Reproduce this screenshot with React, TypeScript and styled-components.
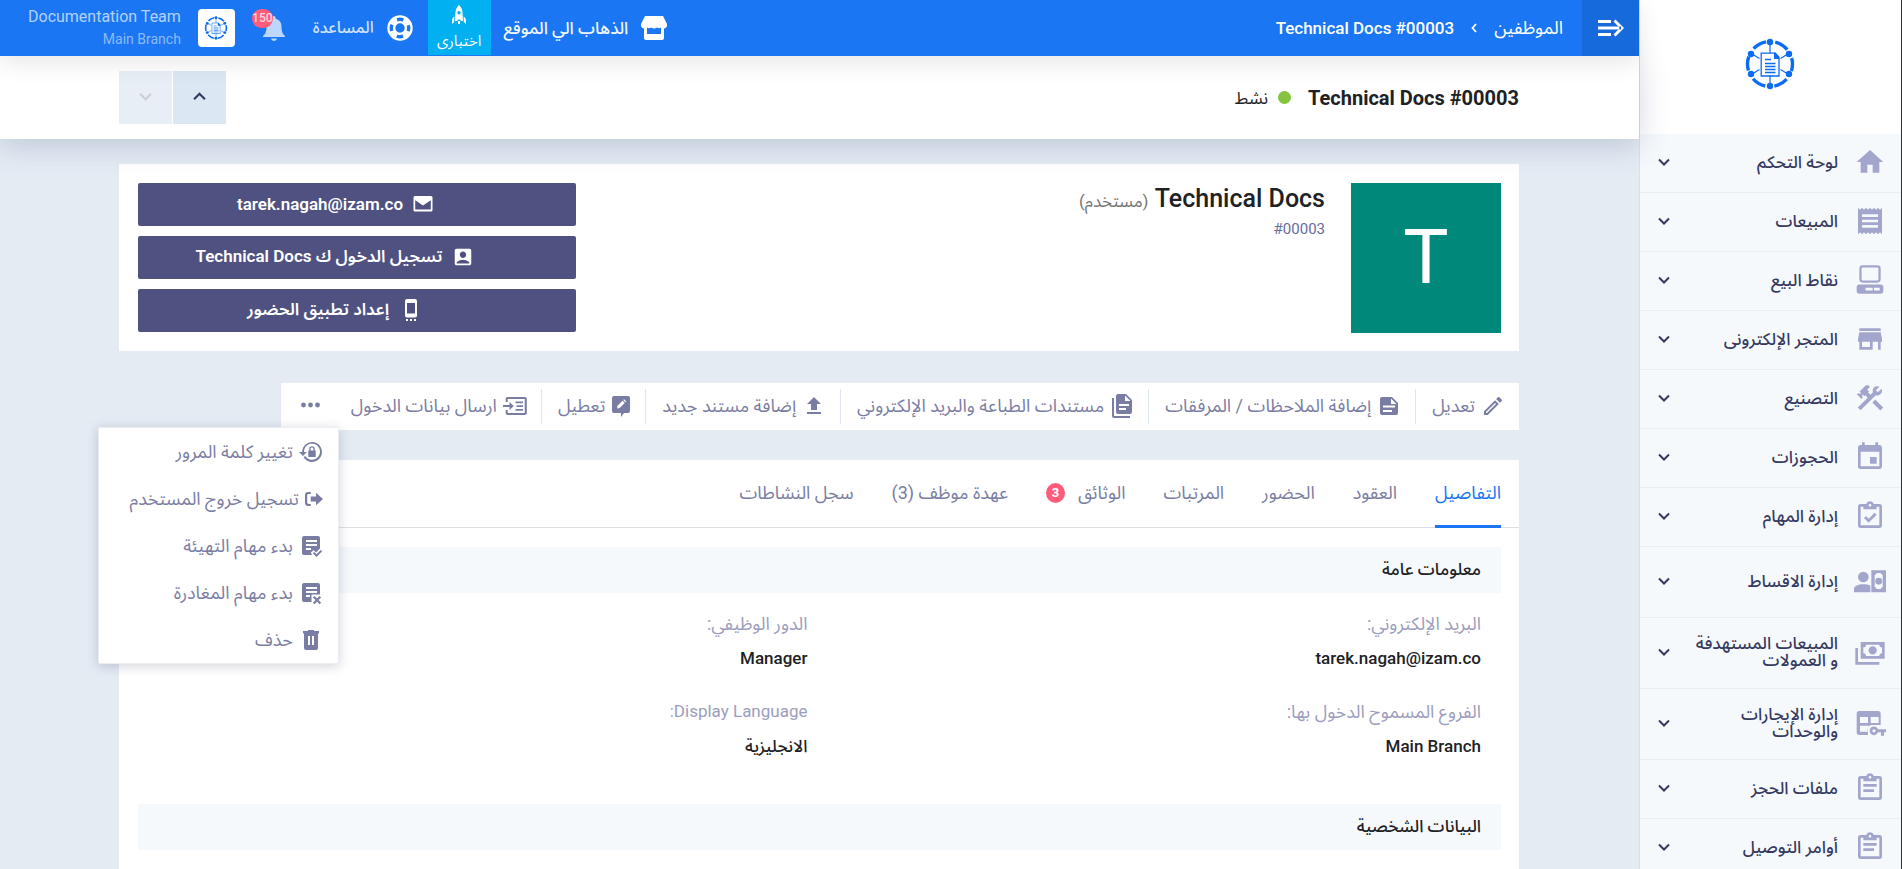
import React from 'react';
import styled, { createGlobalStyle } from 'styled-components';
import { MdEvent, MdFileUpload, MdHome, MdReceipt, MdStore, MdAccountBox } from 'react-icons/md';

const GlobalStyle = createGlobalStyle`
  *, *::before, *::after { box-sizing: border-box; }
  body {
    margin: 0;
    background: #e4ebf3;
    font-family: Roboto, "Noto Sans Arabic", "DejaVu Sans", sans-serif;
    font-size: 17px;
    color: #202124;
  }
  button { font: inherit; border: 0; cursor: pointer; }
  a { text-decoration: none; color: inherit; }
  h1, h2, p, dl, dt, dd, ul { margin: 0; padding: 0; }
  ul { list-style: none; }
  svg { display: block; flex: none; }
`;

/* ---------- shell ---------- */

const Shell = styled.div`
  display: flex;
  height: 100vh;
  overflow: hidden;
  border-right: 1px solid #2b2d33;
`;

const Sidebar = styled.aside`
  flex: none;
  width: 262px;
  display: flex;
  flex-direction: column;
  background: #f5f9fc;
  border-left: 1px solid #dcdfe6;
`;

const Brand = styled.a`
  flex: none;
  height: 134px;
  padding: 0 2px 6px 0;
  display: grid;
  place-items: center;
  background: #fff;
`;

const SideNav = styled.nav`
  flex: 1;
  min-height: 0;
  overflow-y: auto;
  scrollbar-width: none;
`;

const SideItem = styled.button<{ $tall?: boolean }>`
  width: 100%;
  min-height: ${p => (p.$tall ? 71 : 59)}px;
  padding: 0 15px 2px 18px;
  display: flex;
  align-items: center;
  gap: 16px;
  text-align: right;
  background: transparent;
  border-bottom: 1px solid #eaeef2;
  color: #36395f;
`;

const SideIcon = styled.span`
  color: #a2a6cc;
`;

const SideLabel = styled.span`
  flex: 1;
  font-weight: 500;
  line-height: 17px;
`;

const Main = styled.div`
  flex: 1;
  min-width: 0;
  display: flex;
  flex-direction: column;
`;

/* ---------- top bar ---------- */

const TopBar = styled.header`
  position: relative;
  z-index: 3;
  flex: none;
  height: 56px;
  display: flex;
  align-items: center;
  background: #1a76f3;
  color: #fff;
  box-shadow: 0 6px 24px rgba(0, 0, 0, 0.1);
`;

const CollapseButton = styled.button`
  align-self: stretch;
  width: 57px;
  display: grid;
  place-items: center;
  background: #176adb;
  color: #fff;
`;

const Breadcrumb = styled.nav`
  display: flex;
  align-items: center;
  gap: 17px;
  padding: 0 19px;
  line-height: 24px;
  a { font-size: 18px; }
`;

const Crumb = styled.span`
  font-weight: 500;
`;

const TopActions = styled.div`
  align-self: stretch;
  margin-right: auto;
  padding-left: 28px;
  display: flex;
  align-items: center;
`;

const TopLink = styled.a<{ $dim?: boolean }>`
  display: flex;
  align-items: center;
  gap: 13px;
  padding: 0 15px 0 13px;
  font-size: ${p => (p.$dim ? 16 : 17)}px;
  font-weight: 500;
  line-height: 24px;
  span { opacity: ${p => (p.$dim ? 0.8 : 0.95)}; }
`;

const TrialBadge = styled.a`
  align-self: stretch;
  width: 63px;
  margin-bottom: 1px;
  padding-top: 5px;
  display: flex;
  flex-direction: column;
  align-items: center;
  gap: 5px;
  background: #00b0f0;
  font-size: 15px;
  line-height: 24px;
`;

const BellButton = styled.button`
  position: relative;
  margin-right: 15px;
  padding: 0;
  background: transparent;
  color: #bcd7fb;
`;

const BellCount = styled.span`
  position: absolute;
  left: -11px;
  top: -7px;
  width: 21px;
  height: 19px;
  border-radius: 10px;
  background: #ff5b7b;
  color: #ffd9e0;
  font-size: 12px;
  font-weight: 500;
  line-height: 19px;
  text-align: center;
`;

const Avatar = styled.span`
  width: 37px;
  height: 38px;
  margin: 0 28px 0 17px;
  display: grid;
  place-items: center;
  border-radius: 4px;
  background: #fff;
`;

const Account = styled.a`
  display: flex;
  flex-direction: column;
  direction: ltr;
  align-items: flex-end;
  line-height: 22px;
  font-size: 16px;
  color: #b3d1fb;
  small { font-size: 14px; color: #8dbaf9; }
`;

/* ---------- page header ---------- */

const PageHead = styled.div`
  position: relative;
  z-index: 2;
  flex: none;
  padding: 15px 17px 15px 16px;
  background: #fff;
  box-shadow: 0 6px 30px rgba(70, 80, 130, 0.24);
`;

const Container = styled.div`
  width: 100%;
  max-width: 1400px;
  margin: 0 auto;
`;

const HeadRow = styled(Container)`
  display: flex;
  align-items: center;
`;

const PageTitle = styled.h1`
  font-size: 20px;
  font-weight: 700;
  line-height: 28px;
`;

const Status = styled.span`
  margin-right: 17px;
  display: flex;
  align-items: center;
  gap: 10px;
  line-height: 28px;
  &::before {
    content: '';
    width: 13px;
    height: 13px;
    border-radius: 50%;
    background: #84c341;
  }
`;

const Pager = styled.div`
  margin-right: auto;
  display: flex;
  gap: 1px;
`;

const PagerButton = styled.button`
  width: 53px;
  height: 53px;
  padding-bottom: 4px;
  display: grid;
  place-items: center;
  background: #dbe7f2;
  color: #36395f;
  &:disabled { background: #e8eef6; color: #cccfd3; cursor: default; }
`;

const Content = styled.main`
  flex: 1;
  min-height: 0;
  padding: 25px 17px 0 16px;
  overflow-y: auto;
  scrollbar-width: none;
`;

/* ---------- profile ---------- */

const Profile = styled.section`
  padding: 19px 18px 18px 19px;
  display: flex;
  background: #fff;
`;

const Portrait = styled.div`
  flex: none;
  width: 150px;
  height: 150px;
  background: #00897b;
  color: #fff;
  font-size: 76px;
  line-height: 148px;
  text-align: center;
`;

const Identity = styled.div`
  flex: 1;
  padding: 0 26px;
`;

const PersonName = styled.h2`
  font-size: 25px;
  font-weight: 500;
  line-height: 32px;
  small { font-size: 17px; font-weight: 400; color: #757575; }
`;

const PersonCode = styled.p`
  font-size: 15px;
  line-height: 24px;
  text-align: right;
  color: #666ba0;
`;

const ProfileActions = styled.div`
  flex: none;
  width: 438px;
  display: flex;
  flex-direction: column;
  gap: 10px;
`;

const ProfileButton = styled.a`
  height: 43px;
  padding: 0 44px 1px 0;
  display: flex;
  align-items: center;
  justify-content: center;
  gap: 10px;
  border-radius: 2px;
  background: #4f5281;
  color: #fff;
  font-weight: 600;
`;

/* ---------- toolbar ---------- */

const Toolbar = styled.div`
  width: fit-content;
  height: 47px;
  margin: 32px 0 30px;
  display: flex;
  align-items: center;
  background: #fff;
  color: #7a7da3;
`;

const ToolButton = styled.button`
  height: 35px;
  padding: 0 14px 2px 16px;
  display: flex;
  align-items: center;
  gap: 6px;
  background: transparent;
  color: inherit;
  font-size: 18px;
  line-height: 24px;
  white-space: nowrap;
  & + & { border-right: 1px solid #dfe5f0; }
`;

const MoreWrap = styled.div`
  position: relative;
`;

const MoreButton = styled.button`
  height: 47px;
  padding: 0 15px 0 20px;
  background: transparent;
  color: inherit;
`;

const Menu = styled.ul`
  position: absolute;
  z-index: 1;
  top: 46px;
  right: -4px;
  width: 241px;
  background: #fff;
  border: 1px solid #eceef3;
  border-radius: 2px;
  box-shadow: 0 2px 12px rgba(40, 45, 80, 0.22);
`;

const MenuItem = styled.button`
  width: 100%;
  height: 47px;
  padding: 0 15px;
  display: flex;
  align-items: center;
  gap: 6px;
  background: transparent;
  color: inherit;
  font-size: 18px;
  line-height: 24px;
  white-space: nowrap;
`;

/* ---------- details ---------- */

const Panel = styled.section`
  background: #fff;
`;

const Tabs = styled.nav`
  display: flex;
  gap: 38px;
  padding: 0 18px;
  border-bottom: 1px solid #dcdfe3;
`;

const Tab = styled.a<{ $active?: boolean }>`
  height: 68px;
  margin-bottom: -1px;
  display: flex;
  align-items: center;
  gap: 13px;
  border-bottom: 3px solid ${p => (p.$active ? '#1a76f3' : 'transparent')};
  color: ${p => (p.$active ? '#1a76f3' : '#7a7da3')};
  font-size: 18px;
  white-space: nowrap;
`;

const TabCount = styled.span`
  width: 19px;
  height: 20px;
  border-radius: 50%;
  background: #ff5b7b;
  color: #fff;
  font-size: 13px;
  font-weight: 700;
  line-height: 20px;
  text-align: center;
`;

const PanelBody = styled.div`
  padding: 19px 18px 19px 19px;
`;

const SectionTitle = styled.h2`
  padding: 0 20px 2px;
  font-size: 17px;
  font-weight: 500;
  line-height: 44px;
  background: #f5f9fc;
`;

const Fields = styled.dl`
  display: grid;
  grid-template-columns: 1fr 1fr;
  row-gap: 18px;
  padding: 13px 8px 40px;
`;

const Field = styled.div`
  padding: 0 12px;
  line-height: 35px;
  dt { color: #9b9ebd; font-size: 18px; }
  dt:lang(en) { font-size: 17px; }
  dd { font-weight: 500; }
`;

/* ---------- drawings ---------- */

const Glyph = ({ d, size = 24, width, box = '0 0 24 24' }: { d: string; size?: number; width?: number; box?: string }) => (
  <svg width={width ?? size} height={size} viewBox={box} fill="currentColor" fillRule="evenodd" aria-hidden="true">
    <path d={d} />
  </svg>
);

const Chevron = ({ up, size = 12 }: { up?: boolean; size?: number }) => (
  <svg width={size} height={size} viewBox="0 0 12 12" fill="none" stroke="currentColor" strokeWidth="2" aria-hidden="true">
    <path d={up ? 'M1 8.5 6 3.5l5 5' : 'M1 3.5l5 5 5-5'} />
  </svg>
);

const BrandMark = ({ size }: { size: number }) => (
  <svg width={size} height={size} viewBox="0 0 52 52" fill="none" stroke="#0a6cf1" aria-hidden="true">
    <circle cx="26" cy="26" r="22.5" strokeWidth="3.4" strokeDasharray="14.2 9.36" strokeDashoffset="7.1" />
    <path d="M26 6v9M26 37v9M9 16.5l6.5 4M43 16.5l-6.5 4M9 35.5l6.5-4M43 35.5l-6.5-4" strokeWidth="1.2" />
    <g fill="#0a6cf1" stroke="none">
      <circle cx="26" cy="4" r="3.2" />
      <circle cx="26" cy="48" r="3.2" />
      <circle cx="7" cy="16" r="3.2" />
      <circle cx="45" cy="16" r="3.2" />
      <circle cx="7" cy="36" r="3.2" />
      <circle cx="45" cy="36" r="3.2" />
      <path d="M30 14.5h1.5l3.7 4v2.500H30z" />
    </g>
    <path d="M18.5 15.2h12.500l4 4.300v18.500H17.200V15.200zM21 21.500h6M21 25.500h10.500M21 28.500h10.500M21 31.500h10.500M21 34.500h10.500" strokeWidth="1.3" />
  </svg>
);

const clipboard =
  'M19 3h-4.180C14.400 1.840 13.300 1 12 1s-2.400.84-2.820 2H5a2 2 0 0 0-2 2v14a2 2 0 0 0 2 2h14a2 2 0 0 0 2-2V5a2 2 0 0 0-2-2zM12 3a1 1 0 1 1 0 2 1 1 0 0 1 0-2zM7 7h10V5h2v14H5V5h2z';

const shapes = {
  pos: 'M6.500 1h11A2.500 2.500 0 0 1 20 3.500v8a2.500 2.500 0 0 1-2.500 2.500h-11A2.500 2.500 0 0 1 4 11.500v-8A2.500 2.500 0 0 1 6.500 1zM6.500 2.700a.8.8 0 0 0-.8.8v8a.8.8 0 0 0 .8.8h11a.8.8 0 0 0 .8-.8v-8a.8.8 0 0 0-.8-.8zM4 15.300h16a2 2 0 0 1 2 2v3a2 2 0 0 1-2 2H4a2 2 0 0 1-2-2v-3a2 2 0 0 1 2-2zM8.600 17.900v2h5.400v-2zM15 17.900v2h4.300v-2z',
  tools:
    'M13.780 15.300l6 6 2.110-2.160-6-6zM17.500 10.100c-.39 0-.81-.05-1.140-.19L4.970 21.250l-2.110-2.110 7.410-7.400L8.500 9.960l-.72.7-1.450-1.410v2.860l-.7.7-3.520-3.560.7-.7h2.810l-1.400-1.410 3.560-3.560a2.976 2.976 0 0 1 4.220 0L9.890 5.740l1.410 1.400-.71.71 1.790 1.780 1.820-1.880c-.14-.33-.2-.75-.2-1.120a3.490 3.490 0 0 1 3.500-3.520c.59 0 1.110.14 1.580.42L16.410 6.200l1.500 1.500 2.670-2.670c.28.47.42.97.42 1.600 0 1.920-1.550 3.470-3.500 3.470z',
  tasks: clipboard + 'M7.500 13.500 9 12l2 2 4.500-4.500L17 11l-6 6z',
  file: clipboard + 'M17 11H7V9h10zM15 15H7v-2h8z',
  installments:
    'M7 5a4 4 0 1 1 0 8 4 4 0 0 1 0-8zM0 20.500v-2.500c0-2.200 3.200-3.500 7-3.500 2 0 4 .4 5.300 1v5zM13 4h11v16.500H13zM15.500 7.500v9a2 2 0 0 1 1.500 1.500h3a2 2 0 0 1 1.500-1.500v-9A2 2 0 0 1 20 6h-3a2 2 0 0 1-1.500 1.500zM18.500 9.500a2.600 2.600 0 1 1 0 5.200 2.600 2.600 0 0 1 0-5.200z',
  money:
    'M5 4.500h18v12.500H5zM14 7.700a3.100 3.100 0 1 1 0 6.200 3.100 3.100 0 0 1 0-6.200zM9 6.500a2 2 0 0 1-2 2v4.500a2 2 0 0 1 2 2h10a2 2 0 0 1 2-2V8.500a2 2 0 0 1-2-2zM1 9h2v10.500h16v2H1z',
  rental:
    'M4 3h14a2 2 0 0 1 2 2v8.500h-7.500A4.500 4.500 0 0 0 10.500 19.500V21H4a2 2 0 0 1-2-2V5a2 2 0 0 1 2-2zM4.500 7.500V12h6V7.500zM12.500 7.500V12h6V7.500zM4.500 14v4.500h5.300c-.1-1.800.5-3.400 1.700-4.500zM15 14.700c1.400 0 2.500.8 3 2H24v2.300h-1.500V21.500h-2.300V19H18a3.200 3.200 0 1 1-3-4.300zM15 16.700a1.200 1.200 0 1 0 0 2.400 1.200 1.200 0 0 0 0-2.400z',
  storefront:
    'M4 0h18l4 8a3.500 3.500 0 0 1-3 4.500V22a2 2 0 0 1-2 2H5a2 2 0 0 1-2-2V12.500A3.500 3.500 0 0 1 0 8zM6 11.500V18h14v-6.500c-1.300 1-2.800 1-4 0-1.800 1.300-4.200 1.300-6 0-1.200 1-2.700 1-4 0z',
  bell: 'M11 25a3 3 0 0 0 3-2.500H8A3 3 0 0 0 11 25zM12.500 2.700C16 3.400 18.500 6.200 18.500 10c0 5.500 1 8 3.500 10v1H0v-1c2.500-2 3.500-4.500 3.500-10C3.500 6.200 6 3.400 9.500 2.700V1.500a1.500 1.500 0 0 1 3 0z',
  rocket:
    'M7 0c2.700 2.500 3.600 5.500 3.600 8.500L11 16H8.800L8 14.500H6L5.200 16H3l.4-7.500C3.400 5.500 4.300 2.500 7 0zM7 6a1.700 1.700 0 1 0 0 3.400A1.700 1.700 0 0 0 7 6zM2.400 11.500 2.200 17 0 19v-3.500c0-1.500 1-3 2.400-4zM11.600 11.500c1.400 1 2.400 2.500 2.400 4V19l-2.200-2zM6 16h2v3H6z',
  collapse: 'M0 0h13v3H0zM0 6.500h23v3H0zM0 13h13v3H0zM15.500 1.600 17.500-.4 26 8l-8.500 8.400-2-2L21.800 8z',
  mail: 'M2 0h16a1.500 1.500 0 0 1 1.500 1.500V14A1.500 1.500 0 0 1 18 15.500H2A1.500 1.500 0 0 1 .5 14V1.500A1.500 1.500 0 0 1 2 0zM2.200 4.300V13.500h15.600V4.300L10 9.500z',
  phone:
    'M2 0h8a2 2 0 0 1 2 2v14.500a2 2 0 0 1-2 2H2a2 2 0 0 1-2-2V2a2 2 0 0 1 2-2zM2 4v10.500h8V4zM1 20h2v2H1zM5 20h2v2H5zM9 20h2v2H9z',
  pencil:
    'M14.060 9l.94.94L5.920 19H5v-.92zM17.660 3c-.25 0-.51.1-.7.29l-1.830 1.830 3.750 3.750 1.830-1.830c.39-.39.39-1.040 0-1.410l-2.340-2.340c-.2-.2-.45-.29-.71-.29zM14.060 6.190 3 17.250V21h3.750L17.810 9.940z',
  note: 'M5 3h10l6 6v10a2 2 0 0 1-2 2H5a2 2 0 0 1-2-2V5a2 2 0 0 1 2-2zM14 4.500V10h5.500zM6 11.500v2h12v-2zM6 16v2h9v-2z',
  notes:
    'M8 0h8l6 6v12a2 2 0 0 1-2 2H8a2 2 0 0 1-2-2V2a2 2 0 0 1 2-2zM15 1.500V7h5.500zM9 10v2h10v-2zM9 14v2h7v-2zM2 4h2v18h16v2H4a2 2 0 0 1-2-2z',
  comment:
    'M4 2h14a2 2 0 0 1 2 2v13a2 2 0 0 1-2 2h-4L11 23v-4H4a2 2 0 0 1-2-2V4a2 2 0 0 1 2-2zM7 14.500l.5-2.700 5-5 2.200 2.200-5 5zM13.200 6.100l.9-.9 2.200 2.200-.9.900z',
  send: 'M4.500 3H22a1.800 1.800 0 0 1 1.800 1.800v14.400A1.800 1.800 0 0 1 22 21H4.500a1.800 1.800 0 0 1-1.800-1.800V16h2v3h17V5h-17v3h-2V4.800A1.800 1.800 0 0 1 4.500 3zM0 11h6.500V8l4.300 4-4.300 4v-3H0zM12.500 7.500H20v1.800h-7.500zM13.500 11.200H20V13h-6.500zM12.500 15H20v1.800h-7.500z',
  resetLock:
    'M13 2a10 10 0 1 1-8.500 15.300l1.800-1.200A8 8 0 1 0 5 12h2.800L4 16 0 12h3A10 10 0 0 1 13 2zM10.200 10.500V9a2.800 2.800 0 0 1 5.600 0v1.500h.9v6.500H9.300v-6.500zM11.600 10.500h2.800V9a1.400 1.400 0 0 0-2.800 0z',
  signOut: 'M7 2.500H4a4 4 0 0 0-4 4v9a4 4 0 0 0 4 4h3V17H4.500A1.800 1.800 0 0 1 2.700 15.200V6.800A1.800 1.800 0 0 1 4.500 5H7zM13.500 3.500 22 11l-8.500 7.500V14H7V8h6.500z',
  taskStart:
    'M5 2h14a2 2 0 0 1 2 2v10.500l-4 4-2.500-2.500-2.700 2.700 1.500 2.300H5a2 2 0 0 1-2-2V4a2 2 0 0 1 2-2zM7 6v2h11V6zM7 10v2h11v-2zM7 14v2h5v-2zM17.500 23l-3.700-3.700 1.400-1.400 2.300 2.300 4.300-4.300 1.400 1.400z',
  taskLeave:
    'M5 2h14a2 2 0 0 1 2 2v9.500h-8.500V21H5a2 2 0 0 1-2-2V4a2 2 0 0 1 2-2zM7 6v2h11V6zM7 10v2h11v-2zM7 14v2h4v-2zM15.400 15l2.600 2.600 2.600-2.600 1.500 1.500-2.600 2.600 2.600 2.600-1.500 1.500-2.600-2.600-2.600 2.600-1.500-1.500 2.600-2.600-2.600-2.600z',
  trash: 'M9 2v1H4v2.500h1V20a2 2 0 0 0 2 2h10a2 2 0 0 0 2-2V5.500h1V3h-5V2zM9 8h2v9H9zM13 8h2v9h-2z',
};

const LifeRing = () => (
  <svg width="26" height="26" viewBox="0 0 26 26" fill="none" aria-hidden="true">
    <circle cx="13" cy="13" r="8.7" stroke="#fff" strokeWidth="8" />
    <circle cx="13" cy="13" r="8.7" stroke="#1a76f3" strokeWidth="3.4" strokeDasharray="6.4 7.26" strokeDashoffset="3.2" />
  </svg>
);

const Dots = () => (
  <svg width="19" height="6" viewBox="0 0 19 6" fill="currentColor" aria-hidden="true">
    <circle cx="2.5" cy="3" r="2.4" />
    <circle cx="9.5" cy="3" r="2.4" />
    <circle cx="16.5" cy="3" r="2.4" />
  </svg>
);

const CrumbArrow = () => (
  <svg width="6" height="10" viewBox="0 0 6 10" fill="none" stroke="currentColor" strokeWidth="1.8" aria-hidden="true">
    <path d="M5 1 1.5 5 5 9" />
  </svg>
);

/* ---------- data ---------- */

const navItems: { label: string; icon: React.ReactNode; tall?: boolean }[] = [
  { label: 'لوحة التحكم', icon: <MdHome size={32} /> },
  { label: 'المبيعات', icon: <MdReceipt size={32} /> },
  { label: 'نقاط البيع', icon: <Glyph size={32} d={shapes.pos} /> },
  { label: 'المتجر الإلكترونى', icon: <MdStore size={32} /> },
  { label: 'التصنيع', icon: <Glyph size={32} d={shapes.tools} /> },
  { label: 'الحجوزات', icon: <MdEvent size={32} /> },
  { label: 'إدارة المهام', icon: <Glyph size={32} d={shapes.tasks} /> },
  { label: 'إدارة الاقساط', icon: <Glyph size={32} d={shapes.installments} />, tall: true },
  { label: 'المبيعات المستهدفة و العمولات', icon: <Glyph size={32} d={shapes.money} />, tall: true },
  { label: 'إدارة الإيجارات والوحدات', icon: <Glyph size={32} d={shapes.rental} />, tall: true },
  { label: 'ملفات الحجز', icon: <Glyph size={32} d={shapes.file} /> },
  { label: 'أوامر التوصيل', icon: <Glyph size={32} d={shapes.file} /> },
];

const tools = [
  { label: 'تعديل', icon: <Glyph d={shapes.pencil} /> },
  { label: 'إضافة الملاحظات / المرفقات', icon: <Glyph d={shapes.note} /> },
  { label: 'مستندات الطباعة والبريد الإلكتروني', icon: <Glyph d={shapes.notes} /> },
  { label: 'إضافة مستند جديد', icon: <MdFileUpload size={24} /> },
  { label: 'تعطيل', icon: <Glyph d={shapes.comment} width={20} box="1 0 20 24" /> },
  { label: 'ارسال بيانات الدخول', icon: <Glyph d={shapes.send} /> },
];

const menu = [
  { label: 'تغيير كلمة المرور', icon: <Glyph d={shapes.resetLock} /> },
  { label: 'تسجيل خروج المستخدم', icon: <Glyph d={shapes.signOut} size={18} box="0 0 22 22" /> },
  { label: 'بدء مهام التهيئة', icon: <Glyph d={shapes.taskStart} /> },
  { label: 'بدء مهام المغادرة', icon: <Glyph d={shapes.taskLeave} /> },
  { label: 'حذف', icon: <Glyph d={shapes.trash} /> },
];

const tabs: { label: string; count?: number }[] = [
  { label: 'التفاصيل' },
  { label: 'العقود' },
  { label: 'الحضور' },
  { label: 'المرتبات' },
  { label: 'الوثائق', count: 3 },
  { label: 'عهدة موظف (3)' },
  { label: 'سجل النشاطات' },
];

const fields: { label: string; value: string; lang?: string }[] = [
  { label: 'البريد الإلكتروني:', value: 'tarek.nagah@izam.co' },
  { label: 'الدور الوظيفي:', value: 'Manager' },
  { label: 'الفروع المسموح الدخول بها:', value: 'Main Branch' },
  { label: 'Display Language:', value: 'الانجليزية', lang: 'en' },
];

export default function App() {
  return (
    <>
      <GlobalStyle />
      <Shell dir="rtl" lang="ar">
        <Sidebar>
          <Brand href="#" aria-label="Documentation Team">
            <BrandMark size={52} />
          </Brand>
          <SideNav>
            {navItems.map(item => (
              <SideItem key={item.label} type="button" $tall={item.tall}>
                <SideIcon>{item.icon}</SideIcon>
                <SideLabel>{item.label}</SideLabel>
                <Chevron />
              </SideItem>
            ))}
          </SideNav>
        </Sidebar>

        <Main>
          <TopBar>
            <CollapseButton type="button" aria-label="القائمة">
              <Glyph d={shapes.collapse} size={18} width={26} box="0 -1 26 18" />
            </CollapseButton>
            <Breadcrumb>
              <a href="#">الموظفين</a>
              <CrumbArrow />
              <Crumb>Technical Docs #00003</Crumb>
            </Breadcrumb>
            <TopActions>
              <TopLink href="#">
                <Glyph d={shapes.storefront} size={24} width={26} box="0 0 26 24" />
                <span>الذهاب الي الموقع</span>
              </TopLink>
              <TrialBadge href="#">
                <Glyph d={shapes.rocket} size={19} width={14} box="0 0 14 19" />
                <span>اختبارى</span>
              </TrialBadge>
              <TopLink href="#" $dim>
                <LifeRing />
                <span>المساعدة</span>
              </TopLink>
              <BellButton type="button" aria-label="الإشعارات">
                <Glyph d={shapes.bell} size={25} width={22} box="0 0 22 25" />
                <BellCount>150</BellCount>
              </BellButton>
              <Avatar>
                <BrandMark size={24} />
              </Avatar>
              <Account href="#">
                <span>Documentation Team</span>
                <small>Main Branch</small>
              </Account>
            </TopActions>
          </TopBar>

          <PageHead>
            <HeadRow>
              <PageTitle>Technical Docs #00003</PageTitle>
              <Status>نشط</Status>
              <Pager>
                <PagerButton type="button" aria-label="السابق">
                  <Chevron up size={13} />
                </PagerButton>
                <PagerButton type="button" aria-label="التالي" disabled>
                  <Chevron size={13} />
                </PagerButton>
              </Pager>
            </HeadRow>
          </PageHead>

          <Content>
            <Container>
              <Profile>
                <Portrait>T</Portrait>
                <Identity>
                  <PersonName>
                    Technical Docs <small>(مستخدم)</small>
                  </PersonName>
                  <PersonCode dir="ltr">#00003</PersonCode>
                </Identity>
                <ProfileActions>
                  <ProfileButton href="#">
                    <Glyph d={shapes.mail} size={16} width={20} box="0 0 20 16" />
                    tarek.nagah@izam.co
                  </ProfileButton>
                  <ProfileButton href="#">
                    <MdAccountBox size={22} />
                    تسجيل الدخول ك Technical Docs
                  </ProfileButton>
                  <ProfileButton href="#">
                    <Glyph d={shapes.phone} size={22} width={24} box="-6 0 24 22" />
                    إعداد تطبيق الحضور
                  </ProfileButton>
                </ProfileActions>
              </Profile>

              <Toolbar>
                {tools.map(tool => (
                  <ToolButton key={tool.label} type="button">
                    {tool.icon}
                    {tool.label}
                  </ToolButton>
                ))}
                <MoreWrap>
                  <MoreButton type="button" aria-label="المزيد" aria-expanded="true">
                    <Dots />
                  </MoreButton>
                  <Menu>
                    {menu.map(item => (
                      <li key={item.label}>
                        <MenuItem type="button">
                          {item.icon}
                          {item.label}
                        </MenuItem>
                      </li>
                    ))}
                  </Menu>
                </MoreWrap>
              </Toolbar>

              <Panel>
                <Tabs>
                  {tabs.map((tab, i) => (
                    <Tab key={tab.label} href="#" $active={i === 0}>
                      {tab.label}
                      {tab.count && <TabCount>{tab.count}</TabCount>}
                    </Tab>
                  ))}
                </Tabs>
                <PanelBody>
                  <SectionTitle>معلومات عامة</SectionTitle>
                  <Fields>
                    {fields.map(f => (
                      <Field key={f.label}>
                        <dt lang={f.lang}>{f.label}</dt>
                        <dd>{f.value}</dd>
                      </Field>
                    ))}
                  </Fields>
                  <SectionTitle>البيانات الشخصية</SectionTitle>
                </PanelBody>
              </Panel>
            </Container>
          </Content>
        </Main>
      </Shell>
    </>
  );
}
